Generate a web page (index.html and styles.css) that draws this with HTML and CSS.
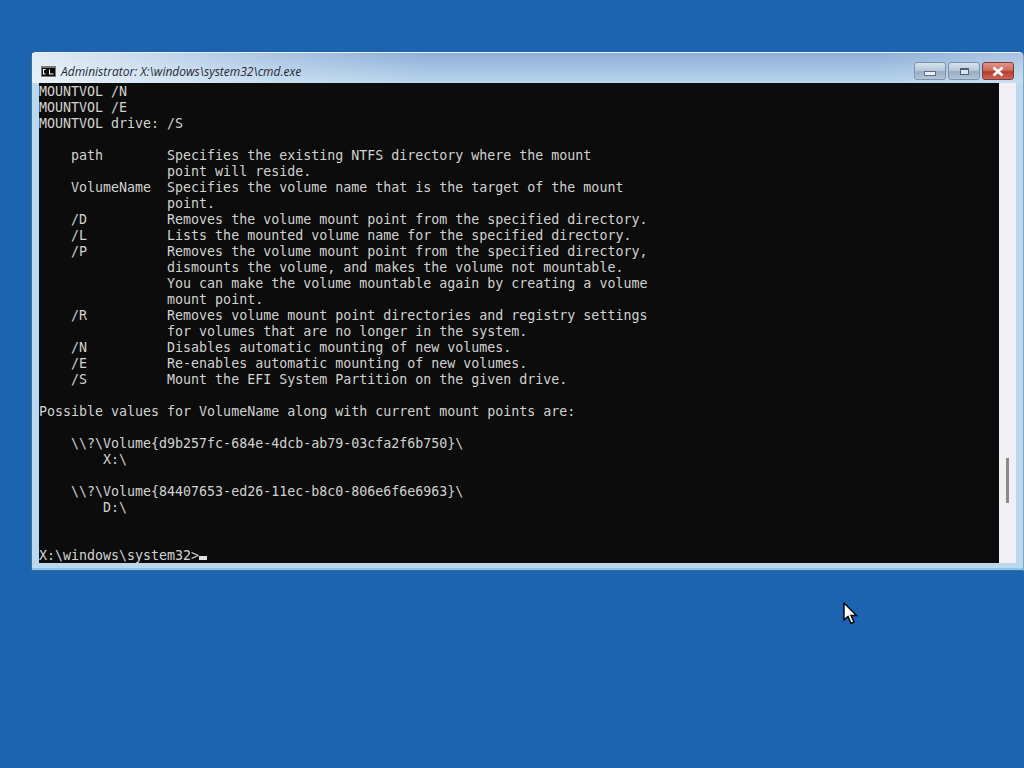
FILE: index.html
```html
<!DOCTYPE html>
<html lang="en">
<head>
<meta charset="utf-8">
<title>Administrator: X:\windows\system32\cmd.exe</title>
<link rel="stylesheet" href="styles.css">
</head>
<body>
<div class="window">
  <div class="titlebar">
    <svg class="app-icon" width="15" height="11" viewBox="0 0 15 11">
      <rect x="0" y="0" width="15" height="11" fill="#77797c"/>
      <rect x="1" y="2" width="13" height="8" fill="#0a0a0a"/>
      <path d="M4.5 3.5H2.5V8H4.5M6.5 4.5v.1M6.5 7v.1M8.5 3.5v4.5H12.5" fill="none" stroke="#fff" stroke-width="1.1"/>
    </svg>
    <span class="title">Administrator: X:\windows\system32\cmd.exe</span>
    <div class="controls">
      <div class="btn"><span class="min-glyph"></span></div>
      <div class="btn"><span class="max-glyph"></span></div>
      <div class="btn close">
        <svg width="14" height="11" viewBox="0 0 14 11"><path d="M2.5 1.5L11.5 9.5M11.5 1.5L2.5 9.5" stroke="#fff" stroke-width="2.8" fill="none"/></svg>
      </div>
    </div>
  </div>
  <div class="client">
    <pre class="console">MOUNTVOL /N
MOUNTVOL /E
MOUNTVOL drive: /S

    path        Specifies the existing NTFS directory where the mount
                point will reside.
    VolumeName  Specifies the volume name that is the target of the mount
                point.
    /D          Removes the volume mount point from the specified directory.
    /L          Lists the mounted volume name for the specified directory.
    /P          Removes the volume mount point from the specified directory,
                dismounts the volume, and makes the volume not mountable.
                You can make the volume mountable again by creating a volume
                mount point.
    /R          Removes volume mount point directories and registry settings
                for volumes that are no longer in the system.
    /N          Disables automatic mounting of new volumes.
    /E          Re-enables automatic mounting of new volumes.
    /S          Mount the EFI System Partition on the given drive.

Possible values for VolumeName along with current mount points are:

    \\?\Volume{d9b257fc-684e-4dcb-ab79-03cfa2f6b750}\
        X:\

    \\?\Volume{84407653-ed26-11ec-b8c0-806e6f6e6963}\
        D:\


X:\windows\system32&gt;<span class="cursor"></span></pre>
    <div class="scrollbar"><div class="thumb"></div></div>
  </div>
</div>
<svg class="pointer" width="16" height="24" viewBox="0 0 16 24">
  <path d="M1 1V18L5 14.5L8 21.5L11 20L8 13.5H13.5Z" fill="#fff" stroke="#000" stroke-width="1.4"/>
</svg>
</body>
</html>
```
FILE: styles.css
```css
html, body {
  margin: 0;
  height: 100%;
  overflow: hidden;
  background: #1c64b0;
}
.window {
  position: absolute;
  left: 31px;
  top: 52px;
  width: 993px;
  height: 519px;
  box-sizing: border-box;
  padding: 0 7px 5px 7px;
  background: #bcd8ee;
  border: 1px solid #3a6c99;
  border-top-color: #e8f1f8;
  border-right-color: #7fa6c6;
  border-radius: 5px 5px 0 0;
  box-shadow: inset 0 -2px 0 #8cc4ea;
  display: flex;
  flex-direction: column;
}
.titlebar {
  height: 30px;
  flex: none;
  display: flex;
  align-items: center;
  margin: 0 -7px;
  padding: 6px 0 0 9px;
  box-sizing: border-box;
  background:
    linear-gradient(90deg, rgba(240, 246, 250, 0.85) 0%, rgba(240, 246, 250, 0.35) 22%, rgba(240, 246, 250, 0) 40%, rgba(240, 246, 250, 0) 85%, rgba(240, 246, 250, 0.3) 100%),
    linear-gradient(#8eadd8 0%, #a3c2e2 50%, #b8d6ec 100%);
}
.app-icon { flex: none; }
.title {
  margin-left: 5px;
  font: italic 12px "Open Sans", "Liberation Sans", sans-serif;
  color: #1f2a36;
  flex: 1;
}
.controls {
  display: flex;
  gap: 2px;
  margin-right: 9px;
}
.btn {
  width: 30px;
  height: 16px;
  border: 1px solid #7d93aa;
  border-radius: 3px;
  background: linear-gradient(#d6e2ee 0%, #b9cadb 45%, #97adc3 55%, #b4c7da 100%);
  display: flex;
  align-items: center;
  justify-content: center;
}
.close {
  background: linear-gradient(#e0968a 0%, #cf6a5c 45%, #b73a2e 55%, #c9675a 100%);
  border-color: #7a3a3c;
}
.min-glyph {
  width: 10px;
  height: 3px;
  margin-top: 4px;
  background: #e8eff5;
  border: 1px solid #5d7086;
}
.max-glyph {
  width: 7px;
  height: 4px;
  background: #d9e3ec;
  border: 1px solid #4d6076;
  border-top-width: 2px;
}
.client {
  display: flex;
  height: 480px;
  flex: none;
}
.console {
  width: 960px;
  height: 480px;
  margin: 0;
  padding-top: 1px;
  box-sizing: border-box;
  background: #0c0c0c;
  color: #d2d2d2;
  font: 13.3px/16px "DejaVu Sans Mono", monospace;
  overflow: hidden;
  white-space: pre;
}
.cursor {
  display: inline-block;
  width: 8px;
  height: 4px;
  background: #e0e0e0;
}
.scrollbar {
  width: 17px;
  background: #f1eff3;
  display: flex;
  flex-direction: column;
  justify-content: flex-end;
  padding-bottom: 60px;
  box-sizing: border-box;
  align-items: center;
}
.thumb {
  width: 3px;
  height: 45px;
  background: #8a8a8a;
}
.pointer {
  position: absolute;
  left: 843px;
  top: 602px;
}
```
